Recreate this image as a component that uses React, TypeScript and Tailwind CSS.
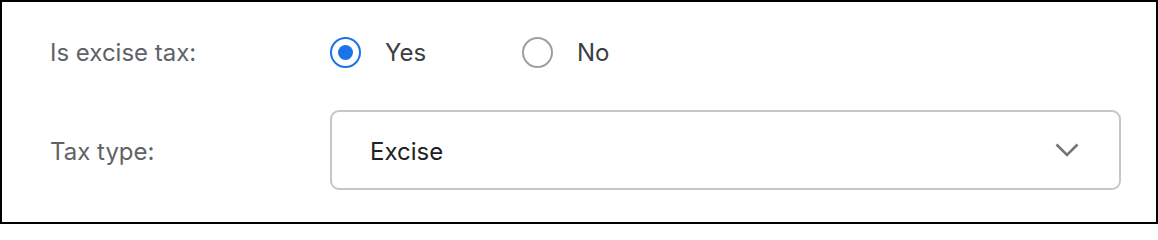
import { useState } from 'react'

const font = { fontFamily: 'Inter, "Liberation Sans", Arial, sans-serif' }

function Radio({ checked, label, onClick }: { checked: boolean; label: string; onClick: () => void }) {
  return (
    <button type="button" onClick={onClick} className="flex items-center w-[192px] text-left">
      <span
        className={`flex items-center justify-center w-[31px] h-[31px] rounded-full border-2 ${
          checked ? 'border-[#1a73e8]' : 'border-[#9aa0a6]'
        }`}
      >
        {checked && <span className="w-[15px] h-[15px] rounded-full bg-[#1a73e8]" />}
      </span>
      <span className="ml-[24px] pt-[2px] text-[24px] text-[#3c4043]">{label}</span>
    </button>
  )
}

export default function App() {
  const [excise, setExcise] = useState(true)

  return (
    <div className="w-[1158px] h-[224px] bg-white border-2 border-black pl-12 pr-[35px] pt-5" style={font}>
      {/* Excise toggle */}
      <div className="flex items-center h-[60px]">
        <div className="w-[280px] pt-[2px] text-[24px] text-[#5f6368]">Is excise tax:</div>
        <div className="flex items-center">
          <Radio checked={excise} label="Yes" onClick={() => setExcise(true)} />
          <Radio checked={!excise} label="No" onClick={() => setExcise(false)} />
        </div>
      </div>

      {/* Tax type */}
      <div className="flex items-center h-[80px] mt-7">
        <div className="w-[280px] pt-[3px] text-[24px] text-[#5f6368]">Tax type:</div>
        <div className="flex-1 flex items-center justify-between h-full border-2 border-[#c4c7c9] rounded-[9px] pl-[38px] pr-[40px]">
          <span className="pt-[3px] text-[24px] text-[#202124]">Excise</span>
          <svg width="24" height="14" viewBox="0 0 24 14" fill="none">
            <path d="M1.5 1.5 L12 12 L22.5 1.5" stroke="#70757a" strokeWidth="2.6" />
          </svg>
        </div>
      </div>
    </div>
  )
}
